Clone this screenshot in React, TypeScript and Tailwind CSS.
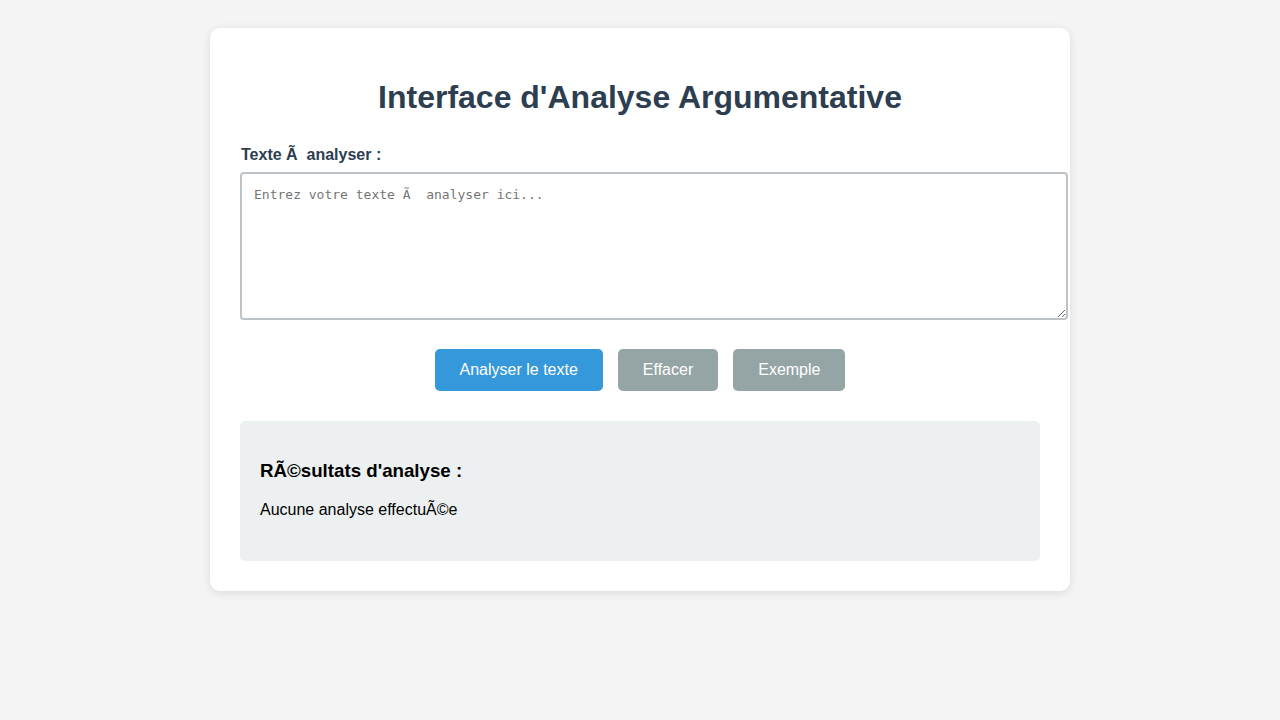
import React from 'react';

const App: React.FC = () => {
  return (
    <div className="min-h-screen bg-[#f4f4f4] pt-[28px] font-['Liberation_Sans',Arial,sans-serif]">
      <div className="mx-auto w-[860px] rounded-[10px] bg-white p-[30px] shadow-[0_2px_10px_rgba(0,0,0,0.1)]">
        {/* Title */}
        <h1 className="mt-[21px] mb-[30px] text-center text-[32px] leading-[37px] font-bold text-[#2c3e50]">
          Interface d'Analyse Argumentative
        </h1>

        {/* Input */}
        <label className="mb-[8px] block pl-[1px] text-[16px] leading-[18px] font-bold text-[#2c3e50]">
          {'Texte Ã\u00a0 analyser :'}
        </label>
        <textarea
          placeholder={'Entrez votre texte Ã\u00a0 analyser ici...'}
          className="block h-[148px] w-[828px] resize-y rounded-[4px] border-2 border-[#bdc3c7] px-[12px] pt-[13px] pb-[10px] font-['DejaVu_Sans_Mono',monospace] text-[13px] leading-[16px] text-[#333] placeholder:text-[#757575] outline-none"
        />

        {/* Actions */}
        <div className="mt-[29px] flex justify-center gap-[15px]">
          <button className="h-[42px] rounded-[5px] bg-[#3498db] px-[25px] text-[16px] text-white">
            Analyser le texte
          </button>
          <button className="h-[42px] rounded-[5px] bg-[#95a5a6] px-[25px] text-[16px] text-white">
            Effacer
          </button>
          <button className="h-[42px] rounded-[5px] bg-[#95a5a6] px-[25px] text-[16px] text-white">
            Exemple
          </button>
        </div>

        {/* Results */}
        <div className="mt-[30px] h-[140px] w-[800px] rounded-[5px] bg-[#ecf0f1] px-[20px] pt-[39px]">
          <h3 className="text-[18.72px] leading-[22px] font-bold text-black">RÃ©sultats d'analyse :</h3>
          <p className="mt-[19px] text-[16px] leading-[18px] text-black">Aucune analyse effectuÃ©e</p>
        </div>
      </div>
    </div>
  );
};

export default App;
